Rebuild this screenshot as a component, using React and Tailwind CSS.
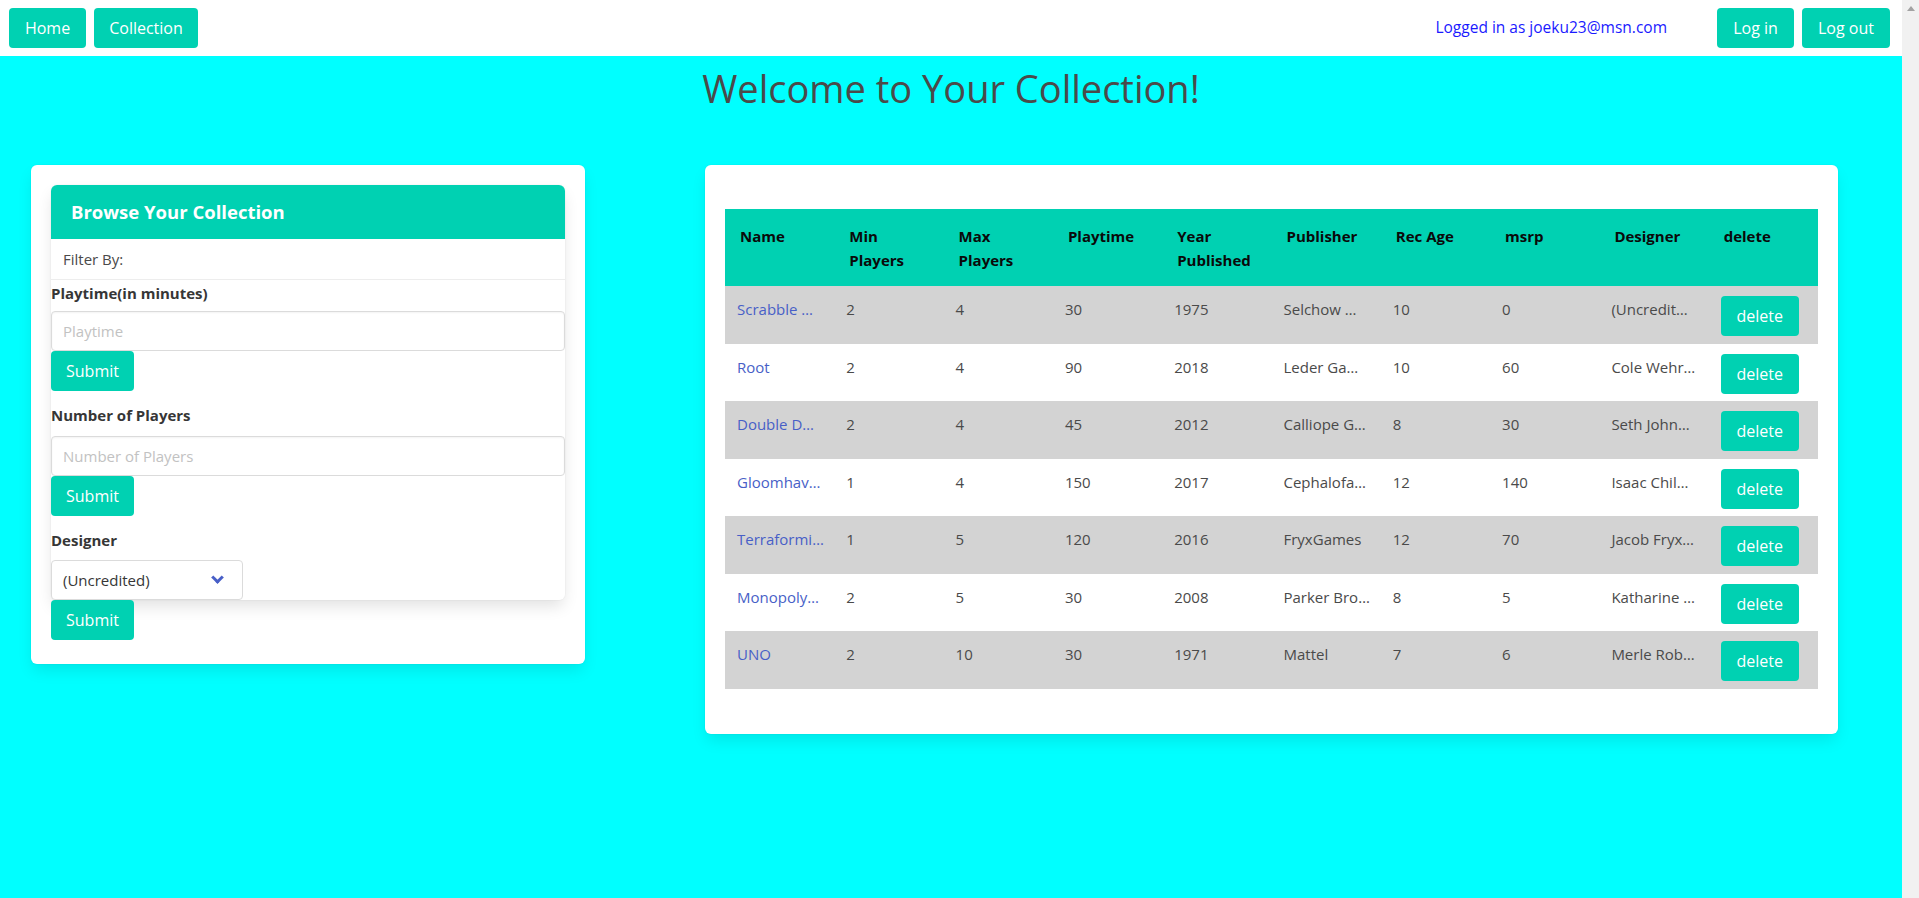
import React from 'react';

const games = [
  ['Scrabble …', '2', '4', '30', '1975', 'Selchow …', '10', '0', '(Uncredit…'],
  ['Root', '2', '4', '90', '2018', 'Leder Ga…', '10', '60', 'Cole Wehr…'],
  ['Double D…', '2', '4', '45', '2012', 'Calliope G…', '8', '30', 'Seth John…'],
  ['Gloomhav…', '1', '4', '150', '2017', 'Cephalofa…', '12', '140', 'Isaac Chil…'],
  ['Terraformi…', '1', '5', '120', '2016', 'FryxGames', '12', '70', 'Jacob Fryx…'],
  ['Monopoly…', '2', '5', '30', '2008', 'Parker Bro…', '8', '5', 'Katharine …'],
  ['UNO', '2', '10', '30', '1971', 'Mattel', '7', '6', 'Merle Rob…'],
];

const headers = [
  ['Name'],
  ['Min', 'Players'],
  ['Max', 'Players'],
  ['Playtime'],
  ['Year', 'Published'],
  ['Publisher'],
  ['Rec Age'],
  ['msrp'],
  ['Designer'],
  ['delete'],
];

function TealButton({ children, className = '' }) {
  return (
    <button className={`flex h-10 items-center justify-center rounded-[4px] bg-[#00d1b2] text-base text-white ${className}`}>
      {children}
    </button>
  );
}

function FilterForm() {
  return (
    <div className="rounded-[6px] bg-white p-5 pb-6 shadow-[0_0.5em_1em_-0.125em_rgba(10,10,10,0.1),0_0_0_1px_rgba(10,10,10,0.02)]">
      <div className="rounded-[6px] shadow-[0_0.5em_1em_-0.125em_rgba(10,10,10,0.12),0_0_0_1px_rgba(10,10,10,0.02)]">
        <div className="rounded-t-[6px] bg-[#00d1b2] px-5 py-[15px] text-[18.5px] leading-6 font-bold text-white">
          Browse Your Collection
        </div>
        <div className="border-b border-[#ededed] px-3 py-2 text-[15px] leading-6 text-[#4a4a4a]">Filter By:</div>
        <label className="mt-[1px] mb-[6px] block text-[15px] leading-6 font-bold text-[#363636]">Playtime(in minutes)</label>
        <input
          placeholder="Playtime"
          className="block h-10 w-full rounded-[4px] border border-[#dbdbdb] px-[11px] text-[15px] shadow-[inset_0_0.0625em_0.125em_rgba(10,10,10,0.05)] placeholder:text-[#c2c2c2]"
        />
        <TealButton className="w-[83px]">Submit</TealButton>
        <label className="mt-3 mb-[9px] block text-[15px] leading-6 font-bold text-[#363636]">Number of Players</label>
        <input
          placeholder="Number of Players"
          className="block h-10 w-full rounded-[4px] border border-[#dbdbdb] px-[11px] text-[15px] shadow-[inset_0_0.0625em_0.125em_rgba(10,10,10,0.05)] placeholder:text-[#c2c2c2]"
        />
        <TealButton className="w-[83px]">Submit</TealButton>
        <label className="mt-3 mb-2 block text-[15px] leading-6 font-bold text-[#363636]">Designer</label>
        <div className="relative flex h-10 w-[192px] items-center rounded-[4px] border border-[#dbdbdb] bg-white pl-[11px] text-[15px] text-[#363636]">
          (Uncredited)
          <span className="absolute top-[12px] right-[20px] h-[9px] w-[9px] -rotate-45 border-b-[3px] border-l-[3px] border-[#485fc7]" />
        </div>
      </div>
      <TealButton className="w-[83px]">Submit</TealButton>
    </div>
  );
}

function GameTable() {
  return (
    <div className="rounded-[6px] bg-white px-5 pt-[44px] pb-[45px] shadow-[0_0.5em_1em_-0.125em_rgba(10,10,10,0.1),0_0_0_1px_rgba(10,10,10,0.02)]">
      <table className="w-full table-fixed border-collapse text-[15px] leading-6">
        <thead>
          <tr className="bg-[#00d1b2]">
            {headers.map((h) => (
              <th key={h[0]} className="px-[15px] pt-[15px] pb-[14px] text-left align-top font-bold text-[#0a0a0a]">
                {h.map((line) => (
                  <div key={line}>{line}</div>
                ))}
              </th>
            ))}
          </tr>
        </thead>
        <tbody>
          {games.map((g, i) => (
            <tr key={g[0]} className={i % 2 === 0 ? 'bg-[#d3d3d3]' : 'bg-white'}>
              {g.map((cell, j) => (
                <td
                  key={j}
                  className={`overflow-hidden px-3 pt-[11px] pb-[6.5px] align-top whitespace-nowrap ${j === 0 ? 'text-[#485fc7]' : 'text-[#4a4a4a]'}`}
                >
                  {cell}
                </td>
              ))}
              <td className="px-3 pt-[10px] pb-[7.5px] align-top">
                <TealButton className="w-[78px]">delete</TealButton>
              </td>
            </tr>
          ))}
        </tbody>
      </table>
    </div>
  );
}

export default function App() {
  return (
    <div className="flex h-[898px] w-full bg-[#00ffff] font-['Open_Sans',sans-serif] text-[#4a4a4a]">
      <div className="flex min-w-0 flex-1 flex-col">
        <nav className="flex h-14 items-center bg-white pl-[9px] pr-3">
          <div className="flex gap-2">
            <TealButton className="w-[77px]">Home</TealButton>
            <TealButton className="w-[104px]">Collection</TealButton>
          </div>
          <div className="ml-auto flex items-center">
            <span className="mr-[50px] text-[15.5px] text-[#1a1aff]">Logged in as joeku23@msn.com</span>
            <div className="flex gap-2">
              <TealButton className="w-[77px]">Log in</TealButton>
              <TealButton className="w-[88px]">Log out</TealButton>
            </div>
          </div>
        </nav>
        <h1 className="mt-[8px] text-center text-[38px] leading-[48px] font-normal text-[#4a4a4a]">
          Welcome to Your Collection!
        </h1>
        <div className="mt-[53px] flex items-start pl-[31px]">
          <div className="w-[554px]">
            <FilterForm />
          </div>
          <div className="ml-[120px] w-[1133px]">
            <GameTable />
          </div>
        </div>
      </div>
      <div className="flex w-[17px] flex-col items-center bg-[#f1f1f1] pt-[6px]">
        <span className="h-0 w-0 border-r-[4px] border-b-[5px] border-l-[4px] border-r-transparent border-b-[#a3a3a3] border-l-transparent" />
      </div>
    </div>
  );
}
